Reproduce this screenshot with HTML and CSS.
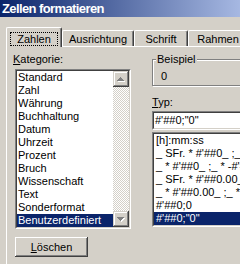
FILE: index.html
```html
<!DOCTYPE html>
<html lang="de">
<head>
    <meta charset="UTF-8">
    <title>Zellen formatieren</title>
    <link rel="stylesheet" href="styles.css">
</head>
<body>
    <div class="titlebar">Zellen formatieren</div>
    <div class="dialog">
        <div class="tabs">
            <div class="tab tab-zahlen active"><span class="focus">Zahlen</span></div>
            <div class="tab tab-ausrichtung">Ausrichtung</div>
            <div class="tab tab-schrift">Schrift</div>
            <div class="tab tab-rahmen">Rahmen</div>
        </div>
        <div class="panel">
            <div class="col-left">
                <div class="label"><u>K</u>ategorie:</div>
                <div class="sunken category">
                    <div class="sunken-inner">
                        <ul class="items">
                            <li>Standard</li>
                            <li>Zahl</li>
                            <li>Währung</li>
                            <li>Buchhaltung</li>
                            <li>Datum</li>
                            <li>Uhrzeit</li>
                            <li>Prozent</li>
                            <li>Bruch</li>
                            <li>Wissenschaft</li>
                            <li>Text</li>
                            <li>Sonderformat</li>
                            <li class="selected">Benutzerdefiniert</li>
                        </ul>
                        <div class="scrollbar">
                            <div class="sb-btn">
                                <svg width="16" height="16" viewBox="0 0 16 16">
                                    <path fill="#fff" d="M8 7h1v1h1v1h1v1h1v1H5v-1h1V9h1V8h1z"/>
                                    <path fill="#808080" d="M7 6h1v1h1v1h1v1h1v1H4V9h1V8h1V7h1z"/>
                                </svg>
                            </div>
                            <div class="sb-track"></div>
                            <div class="sb-btn">
                                <svg width="16" height="16" viewBox="0 0 16 16">
                                    <path fill="#fff" d="M5 7h7v1h-1v1h-1v1H9v1H8v-1H7V9H6V8H5z"/>
                                    <path fill="#808080" d="M4 6h7v1h-1v1H9v1H8v1H7V9H6V8H5V7H4z"/>
                                </svg>
                            </div>
                        </div>
                    </div>
                </div>
                <button class="btn"><u>L</u>öschen</button>
            </div>
            <div class="col-right">
                <fieldset class="group">
                    <legend>Beispiel</legend>
                    <div class="sample">0</div>
                </fieldset>
                <div class="label"><u>T</u>yp:</div>
                <div class="sunken textbox">
                    <div class="sunken-inner">#'##0;"0"</div>
                </div>
                <div class="sunken typelist">
                    <div class="sunken-inner">
                        <ul class="items">
                            <li>[h]:mm:ss</li>
                            <li>_ SFr. * #'##0_ ;_ SFr. * -#'##0_ ;</li>
                            <li>_ * #'##0_ ;_ * -#'##0_ ;</li>
                            <li>_ SFr. * #'##0.00_ ;</li>
                            <li>_ * #'##0.00_ ;_ * -#'##0.00</li>
                            <li>#'##0;0</li>
                            <li class="selected">#'##0;"0"</li>
                        </ul>
                    </div>
                </div>
            </div>
        </div>
    </div>
</body>
</html>
```

FILE: styles.css
```css
* {
    box-sizing: border-box;
}
body {
    margin: 0;
    width: 240px;
    height: 264px;
    overflow: hidden;
    background: #d4d0c8;
    font-family: "Liberation Sans", Arial, sans-serif;
    font-size: 11px;
    line-height: 13px;
    color: #000;
}
.titlebar {
    height: 17px;
    padding-left: 2px;
    background: linear-gradient(90deg, #0a246a, #a6b8e2);
    color: #fff;
    font-weight: bold;
    font-size: 13px;
    letter-spacing: -0.6px;
    line-height: 17px;
    white-space: nowrap;
}
.dialog {
    padding-top: 10px;
}
.tabs {
    display: flex;
    align-items: flex-end;
    height: 19px;
    padding-left: 6px;
    white-space: nowrap;
}
.tab {
    flex: none;
    height: 16px;
    padding-top: 2px;
    text-align: center;
    background: #d4d0c8;
    border-top: 1px solid #fff;
    border-left: 1px solid #fff;
    border-right: 1px solid #404040;
    border-radius: 2px 2px 0 0;
    box-shadow: inset -1px 0 #808080;
}
.tab.active {
    position: relative;
    z-index: 1;
    height: 20px;
    margin-bottom: -1px;
    padding-top: 4px;
}
.tab-zahlen { width: 56px; }
.tab-ausrichtung { width: 72px; }
.tab-schrift { width: 54px; }
.tab-rahmen { width: 60px; }
.focus {
    display: inline-block;
    padding: 0 6px;
    line-height: 12px;
    border: 1px dotted #000;
}
.panel {
    display: flex;
    margin-left: 6px;
    padding: 6px 0 0 6px;
    border-top: 1px solid #fff;
    border-left: 1px solid #fff;
    height: 220px;
}
.col-left {
    width: 118px;
    flex: none;
}
.col-right {
    width: 110px;
    flex: none;
    margin-left: 21px;
}
.label {
    height: 13px;
}
.sunken {
    border: 1px solid;
    border-color: #808080 #fff #fff #808080;
}
.sunken-inner {
    height: 100%;
    border: 1px solid;
    border-color: #404040 #d4d0c8 #d4d0c8 #404040;
    background: #fff;
}
.category {
    width: 116px;
    height: 160px;
    margin: 3px 0 0 2px;
}
.category .sunken-inner {
    display: flex;
}
.items {
    flex: 1;
    margin: 0;
    padding: 0;
    list-style: none;
    overflow: hidden;
}
.items li {
    height: 13px;
    padding: 0 1px;
    white-space: pre;
}
.items li.selected {
    background: #0a246a;
    color: #fff;
}
.scrollbar {
    width: 16px;
    display: flex;
    flex-direction: column;
}
.sb-btn {
    height: 16px;
    background: #d4d0c8;
    box-shadow: inset -1px -1px #404040, inset 1px 1px #d4d0c8, inset -2px -2px #808080, inset 2px 2px #fff;
}
.sb-btn svg {
    display: block;
}
.sb-track {
    flex: 1;
    background-image: repeating-conic-gradient(#fff 0 25%, #d4d0c8 0 50%);
    background-size: 2px 2px;
}
.btn {
    display: block;
    width: 73px;
    height: 20px;
    margin: 8px 0 0 2px;
    padding: 0;
    border: none;
    background: #d4d0c8;
    font: inherit;
    color: #000;
    box-shadow: inset -1px -1px #404040, inset 1px 1px #fff, inset -2px -2px #808080;
}
.group {
    margin: 0;
    padding: 0 0 2px 3px;
    border: 1px solid #808080;
    box-shadow: inset 1px 1px #fff, 1px 1px #fff;
}
.group legend {
    padding: 0 1px;
    background: #d4d0c8;
}
.sample {
    margin-top: 4px;
    padding-left: 5px;
}
.col-right .label {
    margin-top: 10px;
}
.textbox {
    height: 19px;
    margin-top: 2px;
}
.textbox .sunken-inner {
    padding-left: 1px;
    line-height: 15px;
    white-space: pre;
}
.typelist {
    height: 95px;
    margin-top: 2px;
}
.typelist .items li {
    padding-left: 2px;
}
```
